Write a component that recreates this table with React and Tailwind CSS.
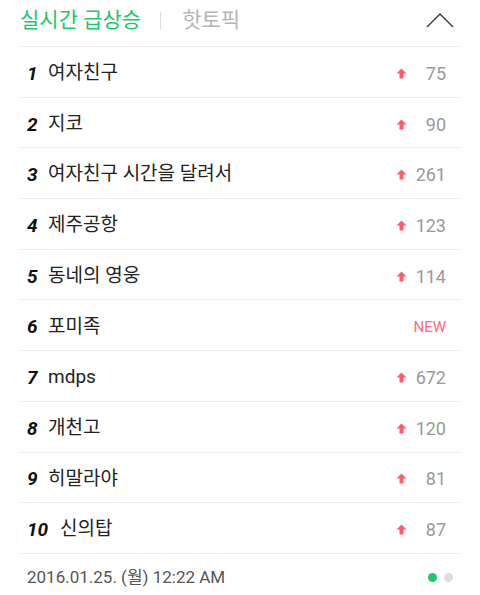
import React from 'react';

const items = [
  { title: '여자친구', count: 75 },
  { title: '지코', count: 90 },
  { title: '여자친구 시간을 달려서', count: 261 },
  { title: '제주공항', count: 123 },
  { title: '동네의 영웅', count: 114 },
  { title: '포미족', isNew: true },
  { title: 'mdps', count: 672 },
  { title: '개천고', count: 120 },
  { title: '히말라야', count: 81 },
  { title: '신의탑', count: 87 },
];

const UpArrow = () => (
  <svg width="11" height="11" viewBox="0 0 11 11">
    <path d="M5.5 0.5 L10.5 5.5 L7.5 5.5 L7.5 10.5 L3.5 10.5 L3.5 5.5 L0.5 5.5 Z" fill="#ff5d6c" />
  </svg>
);

const App = () => {
  return (
    <div
      className="w-[480px] h-[595px] bg-white px-5 overflow-hidden"
      style={{ fontFamily: "Roboto, 'Noto Sans CJK KR', sans-serif" }}
    >
      {/* Header tabs */}
      <div className="h-[47px] flex items-center border-b border-[#eeeeee]">
        <span className="text-[21px] text-[#1ec86a] mb-[4px]">실시간 급상승</span>
        <span className="w-px h-[18px] bg-[#dddddd] ml-[19px] mr-[21px] mb-[4px]" />
        <span className="text-[21px] text-[#b5b5b5] mb-[4px]">핫토픽</span>
        <svg width="28" height="15" viewBox="0 0 28 15" className="ml-auto mr-[6px] mb-[6px]">
          <path d="M1 14 L14 1 L27 14" fill="none" stroke="#333" strokeWidth="1.4" />
        </svg>
      </div>

      {/* Ranking list */}
      <ul>
        {items.map((item, i) => (
          <li key={i} className="h-[50.7px] flex items-center border-b border-[#eeeeee] pt-[3px]">
            <span className="w-[28px] pl-[7px] text-[19px] font-bold italic text-[#111] leading-none">
              {i + 1}
            </span>
            <span className={`text-[19px] text-[#222] ${i === 9 ? 'ml-[12px]' : 'ml-0'}`}>{item.title}</span>
            <div className="ml-auto flex items-center pr-[14px]">
              {item.isNew ? (
                <span className="text-[15px] text-[#ff6a7d]">NEW</span>
              ) : (
                <>
                  <UpArrow />
                  <span className="w-[39px] text-right text-[18px] text-[#999999]">{item.count}</span>
                </>
              )}
            </div>
          </li>
        ))}
      </ul>

      {/* Footer */}
      <div className="h-[48px] flex items-center">
        <span className="pl-[7px] text-[17px] text-[#555555]">2016.01.25. (월) 12:22 AM</span>
        <div className="ml-auto flex items-center gap-[7px] pr-[7px]">
          <span className="w-[9px] h-[9px] rounded-full bg-[#1ec86a]" />
          <span className="w-[9px] h-[9px] rounded-full bg-[#dddddd]" />
        </div>
      </div>
    </div>
  );
};

export default App;
